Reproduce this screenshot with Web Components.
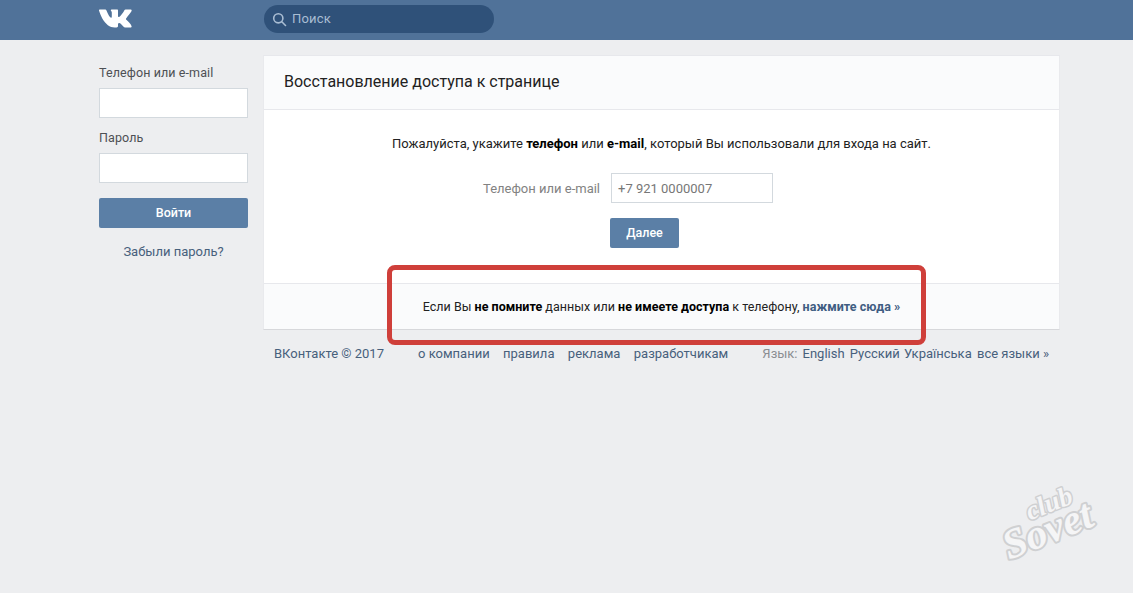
<!DOCTYPE html>
<html lang="ru">
<head>
<meta charset="utf-8">
<title>Восстановление доступа</title>
<style>
    html, body { margin: 0; height: 100%; background: #edeef0; }
    body { font: 13px/16px Roboto, "Liberation Sans", sans-serif; color: #000; overflow: hidden; }
</style>
</head>
<body>
<vk-page></vk-page>
<script>
class VkHeader extends HTMLElement {
    constructor() {
        super();
        this.attachShadow({ mode: 'open' });
        this.shadowRoot.innerHTML = `
            <style>
                :host { display: flex; align-items: center; height: 40px; background: #507299; padding-left: 99px; box-sizing: border-box; }
                .logo { display: block; width: 33px; height: 19px; margin-top: -3px; }
                .search { display: flex; align-items: center; width: 230px; height: 28px; margin: -2px 0 0 132px; border-radius: 14px; background: #2f5179; box-sizing: border-box; padding-left: 8px; }
                .search svg { width: 15px; height: 15px; }
                .search span { margin-left: 5px; color: #a9bdd3; font-size: 13px; letter-spacing: 0.2px; }
            </style>
            <svg class="logo" viewBox="0 0 33 19" aria-label="VK">
                <path fill="#fff" d="M0.6 0.6H6.2C6.9 0.6 7.3 1 7.6 1.7C9 5.3 10.7 8.3 12 8.8C12.5 9 12.8 8.6 12.8 7.6V3.6C12.7 2 11.8 1.8 11.8 1.2C11.8 0.8 12.1 0.6 12.6 0.6H18.1C18.8 0.6 19 0.9 19 1.7V7C19 7.6 19.3 7.9 19.6 7.9C20.2 7.9 20.7 7.5 21.8 6.4C23.5 4.5 24.6 2.8 25.4 1.3C25.6 0.9 26 0.6 26.6 0.6H31.7C32.6 0.6 32.8 1 32.6 1.7C32 3.7 26.9 9.2 26.9 9.9C26.9 10.3 27.1 10.6 27.6 11.1C29.2 12.7 31.7 15 32.5 16.9C32.8 17.8 32.4 18.4 31.5 18.4H26.3C25.4 18.4 24.8 18 24.1 17.2C22.4 15.3 21.4 14 20.2 14C19.4 14 19 14.6 19 15.8V17.1C19 18 18.6 18.4 17.5 18.4H15.7C10.8 18.4 6.6 15.1 3.3 9.4C1.8 6.8 0.7 4 0 1.6C-0.1 1 0.1 0.6 0.6 0.6Z"/>
            </svg>
            <div class="search">
                <svg viewBox="0 0 15 15" fill="none" stroke="#a9bdd3" stroke-width="1.6" stroke-linecap="round">
                    <circle cx="6.3" cy="6.3" r="4.6"/>
                    <path d="M9.8 9.8L13.5 13.5"/>
                </svg>
                <span>Поиск</span>
            </div>
        `;
    }
}
customElements.define('vk-header', VkHeader);

class VkLogin extends HTMLElement {
    constructor() {
        super();
        this.attachShadow({ mode: 'open' });
        this.shadowRoot.innerHTML = `
            <style>
                :host { display: block; width: 149px; flex: none; padding-top: 10px; font-size: 12.5px; }
                label { display: block; height: 16px; line-height: 16px; color: #4d5054; letter-spacing: 0.1px; margin-bottom: 7px; }
                .field { height: 30px; background: #fff; border: 1px solid #d3d9de; box-sizing: border-box; margin-bottom: 12px; }
                .field.last { margin-bottom: 15px; }
                .btn { height: 30px; line-height: 29px; background: #5b7fa6; border-radius: 2px; color: #fff; text-align: center; font-weight: 500; }
                .forgot { margin-top: 16px; text-align: center; color: #47607c; font-size: 13px; line-height: 16px; }
            </style>
            <label>Телефон или e-mail</label>
            <div class="field"></div>
            <label>Пароль</label>
            <div class="field last"></div>
            <div class="btn">Войти</div>
            <div class="forgot">Забыли пароль?</div>
        `;
    }
}
customElements.define('vk-login', VkLogin);

class VkRecoverCard extends HTMLElement {
    constructor() {
        super();
        this.attachShadow({ mode: 'open' });
        this.shadowRoot.innerHTML = `
            <style>
                :host { display: block; background: #fff; border: 1px solid #e9eaed; border-top-color: #e7e8ec; border-bottom-color: #d7d8db; box-sizing: border-box; height: 275px; font-size: 12.5px; }
                .head { height: 53px; line-height: 52px; padding-left: 20px; background: #fafbfc; border-bottom: 1px solid #e7e8ec; font-size: 16px; color: #222; }
                .body { height: 174px; box-sizing: border-box; padding-top: 26px; text-align: center; color: #222; border-bottom: 1px solid #e7e8ec; }
                .intro { font-size: 13px; line-height: 16px; }
                b { font-weight: 700; color: #000; }
                .row { display: flex; align-items: center; margin: 21px 0 0 219px; }
                .row label { color: #828282; width: 117px; flex: none; padding-top: 2px; text-align: right; font-size: 13px; white-space: nowrap; }
                .value { width: 162px; height: 30px; line-height: 30px; margin-left: 11px; padding-left: 6px; border: 1px solid #d3d9de; box-sizing: border-box; text-align: left; color: #777; font-size: 13px; }
                .next { display: block; width: 69px; height: 30px; line-height: 29px; margin: 15px 0 0 346px; background: #5b7fa6; border-radius: 2px; color: #fff; font-weight: 500; }
                .foot { height: 45px; line-height: 46px; background: #fafbfc; text-align: center; color: #222; letter-spacing: 0.02px; }
                .foot a { color: #3f5d82; font-weight: 700; text-decoration: none; }
            </style>
            <div class="head">Восстановление доступа к странице</div>
            <div class="body">
                <div class="intro">Пожалуйста, укажите <b>телефон</b> или <b>e-mail</b>, который Вы использовали для входа на сайт.</div>
                <div class="row">
                    <label>Телефон или e-mail</label>
                    <div class="value">+7 921 0000007</div>
                </div>
                <div class="next">Далее</div>
            </div>
            <div class="foot">Если Вы <b>не помните</b> данных или <b>не имеете доступа</b> к телефону, <a href="#">нажмите сюда »</a></div>
        `;
    }
}
customElements.define('vk-recover-card', VkRecoverCard);

class VkFooter extends HTMLElement {
    constructor() {
        super();
        this.attachShadow({ mode: 'open' });
        this.shadowRoot.innerHTML = `
            <style>
                :host { display: flex; align-items: center; height: 16px; margin-top: 16px; padding: 0 11px; font-size: 13px; color: #47607c; white-space: nowrap; }
                .copy { width: 144px; flex: none; }
                .links { display: flex; gap: 13.4px; }
                .lang { display: flex; gap: 5.25px; margin-left: auto; }
                .lang span { color: #8a8d91; margin-right: -0.25px; }
                .lang .ua { margin-left: -1px; }
            </style>
            <div class="copy">ВКонтакте © 2017</div>
            <div class="links"><span>о компании</span><span>правила</span><span>реклама</span><span>разработчикам</span></div>
            <div class="lang"><span>Язык:</span><div>English</div><div>Русский</div><div class="ua">Українська</div><div>все языки »</div></div>
        `;
    }
}
customElements.define('vk-footer', VkFooter);

// red marker drawn over the screenshot, and the site's watermark
class VkHighlight extends HTMLElement {
    constructor() {
        super();
        this.attachShadow({ mode: 'open' });
        this.shadowRoot.innerHTML = `
            <style>
                :host { position: absolute; left: 387px; top: 265px; width: 539px; height: 80px; box-sizing: border-box; border: 5px solid #cf3f3a; border-radius: 8px; pointer-events: none; }
            </style>
        `;
    }
}
customElements.define('vk-highlight', VkHighlight);

class VkWatermark extends HTMLElement {
    constructor() {
        super();
        this.attachShadow({ mode: 'open' });
        this.shadowRoot.innerHTML = `
            <style>
                :host { position: absolute; left: 995px; top: 482px; width: 110px; height: 80px; }
                svg { display: block; width: 110px; height: 80px; overflow: visible; }
                text { font-family: "Liberation Serif", serif; font-style: italic; font-weight: 700; fill: #f5f5f6; stroke: #cfd0d2; stroke-linejoin: round; paint-order: stroke; }
            </style>
            <svg viewBox="0 0 110 80">
                <g transform="rotate(-22 55 40)">
                    <text x="37" y="31" font-size="27" stroke-width="3">club</text>
                    <text x="3" y="60" font-size="42" stroke-width="4">Sovet</text>
                </g>
            </svg>
        `;
    }
}
customElements.define('vk-watermark', VkWatermark);

class VkPage extends HTMLElement {
    constructor() {
        super();
        this.attachShadow({ mode: 'open' });
        this.shadowRoot.innerHTML = `
            <style>
                :host { display: block; position: relative; width: 1133px; height: 593px; overflow: hidden; }
                .wrap { display: flex; gap: 15px; padding: 15px 0 0 99px; }
                main { width: 797px; flex: none; }
            </style>
            <vk-header></vk-header>
            <div class="wrap">
                <vk-login></vk-login>
                <main>
                    <vk-recover-card></vk-recover-card>
                    <vk-footer></vk-footer>
                </main>
            </div>
            <vk-highlight></vk-highlight>
            <vk-watermark></vk-watermark>
        `;
    }
}
customElements.define('vk-page', VkPage);
</script>
</body>
</html>
